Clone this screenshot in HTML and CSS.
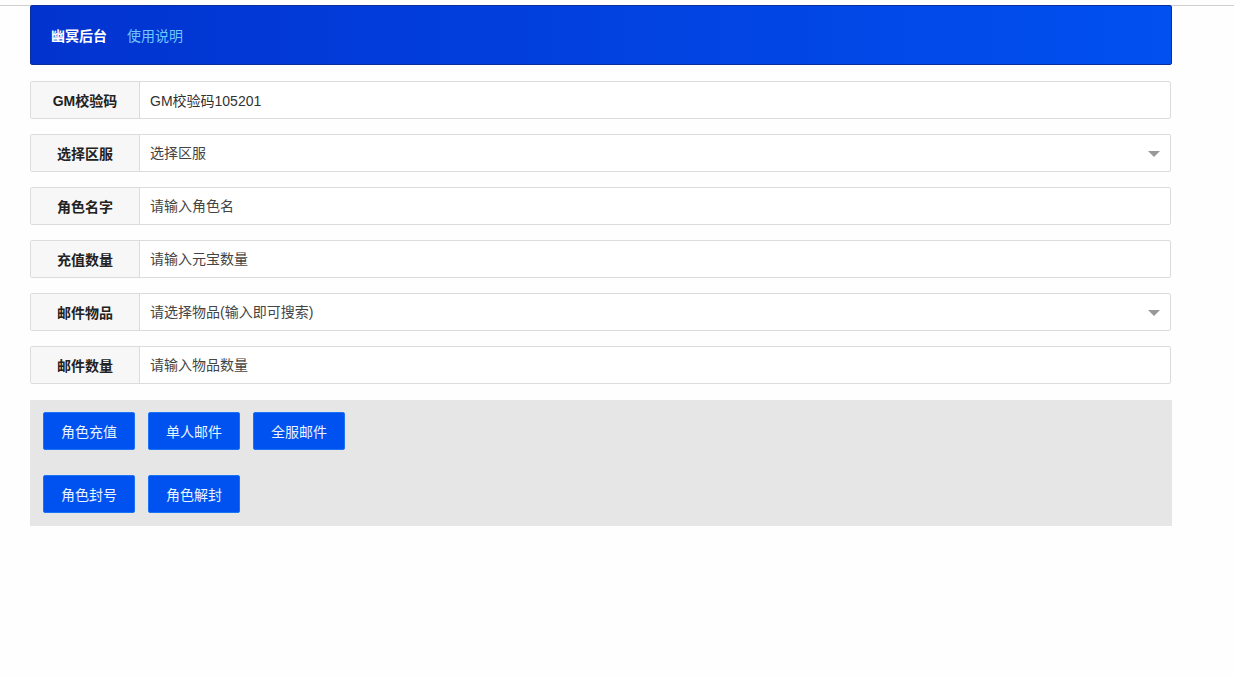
FILE: index.html
```html
<!DOCTYPE html>
<html lang="zh-CN">

<head>
  <meta charset="UTF-8">
  <meta name="viewport" content="width=device-width, initial-scale=1.0">
  <title>幽冥后台</title>
  <link rel="stylesheet" href="styles.css">
</head>

<body>

  <div class="container">
    <div class="header">
      <span class="logo">幽冥后台</span>
      <a class="nav-link" href="#">使用说明</a>
    </div>

    <div class="form-item">
      <label class="form-label">GM校验码</label>
      <div class="form-block">
        <input class="form-input" type="text" value="GM校验码105201">
      </div>
    </div>

    <div class="form-item">
      <label class="form-label">选择区服</label>
      <div class="form-block select">
        <input class="form-input" type="text" placeholder="选择区服" readonly>
        <i class="edge"></i>
      </div>
    </div>

    <div class="form-item">
      <label class="form-label">角色名字</label>
      <div class="form-block">
        <input class="form-input" type="text" placeholder="请输入角色名">
      </div>
    </div>

    <div class="form-item">
      <label class="form-label">充值数量</label>
      <div class="form-block">
        <input class="form-input" type="text" placeholder="请输入元宝数量">
      </div>
    </div>

    <div class="form-item">
      <label class="form-label">邮件物品</label>
      <div class="form-block select">
        <input class="form-input" type="text" placeholder="请选择物品(输入即可搜索)">
        <i class="edge"></i>
      </div>
    </div>

    <div class="form-item">
      <label class="form-label">邮件数量</label>
      <div class="form-block">
        <input class="form-input" type="text" placeholder="请输入物品数量">
      </div>
    </div>

    <div class="btn-panel">
      <div class="btn-row">
        <button class="btn">角色充值</button>
        <button class="btn">单人邮件</button>
        <button class="btn">全服邮件</button>
      </div>
      <div class="btn-row">
        <button class="btn">角色封号</button>
        <button class="btn">角色解封</button>
      </div>
    </div>
  </div>

</body>

</html>
```

FILE: styles.css
```css
body {
  margin: 0;
  padding-top: 4px;
  border-top: 1px solid transparent;
  background-color: #fefefe;
  font-family: "Liberation Sans", "Noto Sans CJK SC", sans-serif;
  font-size: 14px;
  color: #333;
  position: relative;
}

body::before {
  content: "";
  position: absolute;
  left: 0;
  right: 0;
  top: 4px;
  height: 1px;
  background-color: #cfcfcf;
}

.container {
  width: 1142px;
  margin-left: 30px;
  position: relative;
}

.header {
  height: 58px;
  display: flex;
  align-items: center;
  gap: 20px;
  padding-left: 20px;
  background: linear-gradient(to right, #0233cf, #0150f0);
  border: 1px solid #0a2f9a;
  border-radius: 2px;
}

.logo {
  color: #ffffff;
  font-weight: bold;
}

.nav-link {
  color: #6ec8ff;
  text-decoration: none;
}

.form-item {
  display: flex;
  width: 1141px;
  height: 38px;
  margin-top: 15px;
  box-sizing: border-box;
  border: 1px solid #dcdcdc;
  border-radius: 2px;
  background-color: #fff;
}

.header + .form-item {
  margin-top: 16px;
}

.form-label {
  width: 108px;
  flex-shrink: 0;
  display: flex;
  align-items: center;
  justify-content: center;
  background-color: #f7f7f7;
  border-right: 1px solid #dcdcdc;
  font-weight: 600;
  color: #222;
}

.form-block {
  flex: 1;
  position: relative;
  display: flex;
}

.form-input {
  flex: 1;
  border: none;
  outline: none;
  padding: 0 10px;
  font-family: inherit;
  font-size: 14px;
  color: #333;
  background: transparent;
}

.form-input::placeholder {
  color: #444;
}

.edge {
  position: absolute;
  right: 10px;
  top: 16px;
  width: 0;
  height: 0;
  border-left: 6px solid transparent;
  border-right: 6px solid transparent;
  border-top: 6px solid #999;
}

.btn-panel {
  margin-top: 16px;
  padding: 12px 13px 13px;
  background-color: #e6e6e6;
  display: flex;
  flex-direction: column;
  gap: 25px;
}

.btn-row {
  display: flex;
  gap: 13px;
}

.btn {
  width: 92px;
  height: 38px;
  background-color: #0052f0;
  border: 1px solid #1a73f5;
  border-radius: 2px;
  color: #e8f4ff;
  font-family: inherit;
  font-size: 14px;
  cursor: pointer;
}
```
